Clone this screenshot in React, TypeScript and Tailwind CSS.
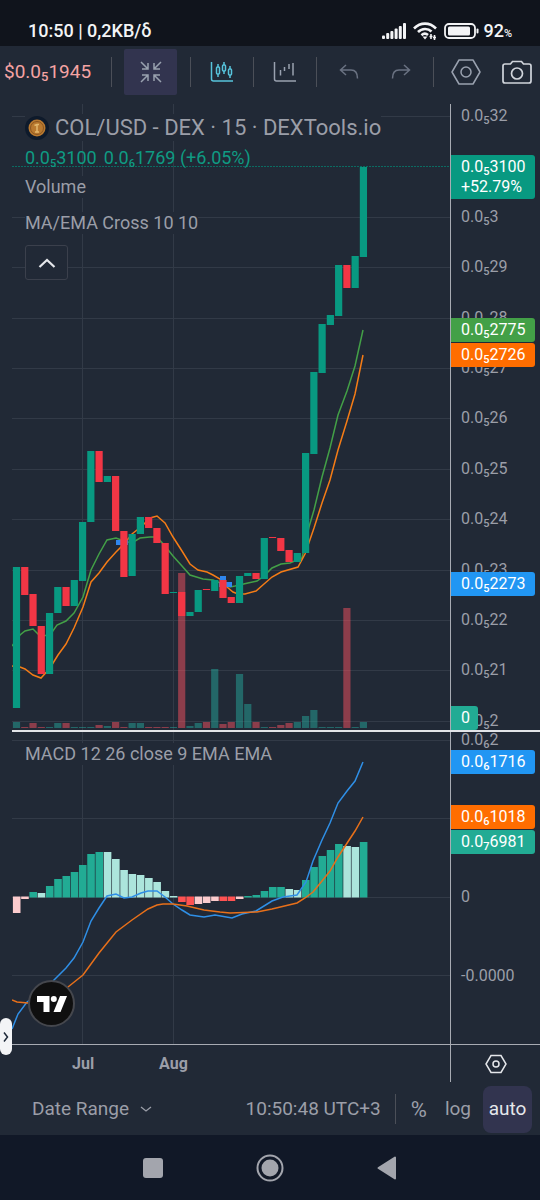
import type { ReactNode } from "react";

const STEP = 8.26;
const FIRST = 16.5;
const BAR = 7.2;

const UP = "#089981";
const DOWN = "#f23645";

// [top, bottom, rising, volume height]
const candles: [number, number, number, number][] = [
  [567, 708, 1, 6], [567, 595, 0, 1], [594, 626, 0, 5], [626, 674, 0, 1],
  [613, 674, 1, 1], [587, 613, 1, 5], [587, 606, 0, 5], [580, 606, 1, 1],
  [522, 581, 1, 1], [451, 522, 1, 1], [451, 482, 0, 3], [476, 482, 1, 2],
  [476, 531, 0, 6], [531, 577, 0, 1], [534, 576, 1, 5], [517, 534, 1, 5],
  [517, 528, 0, 1], [528, 543, 0, 1], [543, 594, 0, 1], [592, 593, 1, 1],
  [592, 616, 0, 155], [612, 616, 1, 2], [590, 612, 1, 5], [589, 590, 0, 6],
  [580, 591, 1, 59], [580, 598, 0, 4], [597, 603, 0, 6], [576, 603, 1, 54],
  [573, 576, 1, 24], [573, 579, 0, 6], [538, 579, 1, 1], [537, 538, 0, 1],
  [538, 551, 0, 3], [550, 562, 0, 5], [553, 562, 1, 6], [453, 553, 1, 12],
  [372, 454, 1, 18], [324, 373, 1, 1], [315, 325, 1, 1], [265, 316, 1, 1],
  [265, 288, 0, 120], [256, 288, 1, 1], [167, 257, 1, 6],
];

const HIST = { g: "#22ab94", l: "#ace5dc", r: "#ff5252", p: "#fccbcd" };

// [end of bar, shade], all bars grow from the zero line
const histogram: [number, keyof typeof HIST][] = [
  [913, "p"], [899, "p"], [892, "g"], [893, "l"], [886, "g"], [879, "g"],
  [876, "g"], [872, "g"], [865, "g"], [854, "g"], [852, "g"], [852, "l"],
  [859, "l"], [870, "l"], [874, "l"], [875, "l"], [878, "l"], [882, "l"],
  [891, "l"], [896, "l"], [902, "r"], [905, "r"], [904, "p"], [903, "p"],
  [901, "p"], [901, "r"], [901, "r"], [899, "p"], [896, "g"], [895, "g"],
  [891, "g"], [887, "g"], [887, "g"], [889, "l"], [890, "l"], [880, "g"],
  [867, "g"], [856, "g"], [850, "g"], [844, "g"], [846, "l"], [847, "l"],
  [842, "g"],
];

const emaLine =
  "12,646 20,635 25,631 33,629 40,636 50,635 57,625 66,621 74,613 83,597 91,570 99,554 107,540 116,538 124,541 132,543 140,538 150,537 157,537 165,546 173,556 182,566 190,575 203,579 213,580 223,584 230,587 235,586 248,583 257,581 264,576 272,568 281,564 290,563 302,558 309,527 314,510 322,477 330,448 338,415 347,391 355,366 363,330";
const maLine =
  "12,666 20,667 25,669 33,675 41,678 50,668 58,655 66,644 74,628 83,607 91,582 99,573 107,562 116,552 124,544 132,534 142,526 150,518 157,516 165,523 173,537 182,551 190,564 198,570 207,572 213,575 220,579 227,587 233,592 238,594 245,594 256,591 264,584 272,577 281,572 298,567 305,554 314,528 322,503 330,480 338,450 347,421 355,394 363,355";
const macdLine =
  "12,1029 18,1014 27,1002 41,992 50,984 57,977 66,968 74,958 83,942 91,921 99,908 107,896 116,894 124,898 132,897 141,893 148,891 157,891 165,897 173,904 182,910 190,915 204,917 215,915 232,918 242,914 256,911 272,901 283,897 297,895 306,882 313,861 322,840 330,823 338,803 347,791 355,781 363,762";
const signalLine =
  "12,1000 17,1002 28,1003 45,1001 58,994 68,987 78,979 83,975 99,953 116,932 132,920 148,909 157,905 163,904 173,904 187,906 204,910 220,912 230,913 257,912 272,909 297,903 305,898 313,892 322,881 330,871 338,857 355,831 363,817";

const barX = (i: number) => FIRST + i * STEP - BAR / 2;

type TinyProps = { lead?: string; sub: string; rest: string; size?: string };

function Tiny({ lead = "0.0", sub, rest, size = "text-[11px]" }: TinyProps) {
  return (
    <>
      {lead}
      <span className={`relative top-[3px] leading-none font-medium ${size}`}>{sub}</span>
      {rest}
    </>
  );
}

function Tick({ y, children }: { y: number; children: ReactNode }) {
  return (
    <span
      className="absolute left-2.5 -translate-y-1/2 whitespace-nowrap text-base leading-5 text-[#9b9ea8]"
      style={{ top: y }}
    >
      {children}
    </span>
  );
}

function Tag({ y, className, children }: { y: number; className: string; children: ReactNode }) {
  return (
    <span
      className={`absolute left-0 -translate-y-1/2 whitespace-nowrap rounded-r-[3px] py-0.5 pl-2.5 text-base leading-5 text-white ${className}`}
      style={{ top: y }}
    >
      {children}
    </span>
  );
}

function Divider() {
  return <span className="h-[30px] w-px shrink-0 bg-[#4b4f58]" />;
}

function StatusBar() {
  return (
    <header className="flex h-[46px] items-end justify-between bg-[#10141c] pr-7 pl-7 pb-1 text-gray-100">
      <span className="text-lg leading-[22px] font-medium">10:50 | 0,2KB/δ</span>
      <div className="flex items-center gap-[7px]">
        <svg className="h-4 w-6" viewBox="0 0 24 16" fill="currentColor" aria-hidden="true">
          <rect x="0" y="12.500" width="3" height="3.500" rx="1" />
          <rect x="4.200" y="10" width="3" height="6" rx="1" />
          <rect x="8.400" y="8" width="3" height="8" rx="1" />
          <rect x="12.600" y="5.500" width="3" height="10.500" rx="1" />
          <rect x="16.800" y="3" width="3" height="13" rx="1" />
          <rect x="21" y="0" width="3" height="16" rx="1" />
        </svg>
        <svg className="h-[18px] w-6" viewBox="0 0 24 18" fill="none" stroke="currentColor" strokeWidth="2.6" aria-hidden="true">
          <path d="M1 6.500C7.500 0 16.500 0 23 6.500" />
          <path d="M5 10C9 6 15 6 18.500 9.500" />
          <path d="M8.500 13.200C10.500 11.300 13 11.300 15 13" />
          <path d="M9.500 14.500h5L12 17.500z" fill="currentColor" stroke="none" />
          <path d="M18 12v5M21.500 13v5" strokeWidth="1.600" />
          <path d="M16.500 14.500h3M20 15.500h3" strokeWidth="1.400" />
        </svg>
        <div className="flex items-center gap-1">
          <svg className="h-4 w-[35px]" viewBox="0 0 35 16" aria-hidden="true">
            <rect x="1" y="1" width="30" height="14" rx="4" fill="none" stroke="currentColor" strokeWidth="1.800" />
            <rect x="4" y="3.500" width="22" height="9" rx="1.500" fill="currentColor" />
            <rect x="32.500" y="5.500" width="2" height="5" rx="1" fill="currentColor" />
          </svg>
          <span className="text-lg leading-[22px] font-medium">
            92<span className="text-[11px] leading-none">%</span>
          </span>
        </div>
      </div>
    </header>
  );
}

function Toolbar() {
  return (
    <div className="flex h-[58px] items-center overflow-hidden pb-1.5 pl-1 text-gray-400">
      <span className="w-[107px] shrink-0 text-[19px] text-[#f5a3a3]">
        <Tiny lead="$0.0" sub="5" rest="1945" size="text-[13px]" />
      </span>
      <Divider />
      <button type="button" aria-label="Exit full screen" className="mr-[13px] ml-3 flex h-[46px] w-[53px] shrink-0 items-center justify-center rounded-xs bg-[#32344f]">
        <svg className="h-[22px] w-[22px]" viewBox="0 0 22 22" fill="none" stroke="currentColor" strokeWidth="1.500">
          <path d="M1 1l7 7M8 2v6H2M21 1l-7 7M14 2v6h6M1 21l7-7M2 14h6v6M21 21l-7-7M20 14h-6v6" />
        </svg>
      </button>
      <Divider />
      <button type="button" aria-label="Candles" className="flex h-[46px] w-[62px] shrink-0 items-center justify-center text-[#57c4dc]">
        <svg className="h-[22px] w-6" viewBox="0 0 24 22" fill="none" stroke="currentColor" strokeWidth="1.500">
          <path d="M1.500 1v17a2 2 0 0 0 2 2H23" />
          <path d="M8 3v3M8 13v3M14 1v3M14 10v3M20 5v3M20 14v3" />
          <rect x="6.500" y="6" width="3" height="7" rx="1" />
          <rect x="12.500" y="4" width="3" height="6" rx="1" />
          <rect x="18.500" y="8" width="3" height="6" rx="1" />
        </svg>
      </button>
      <Divider />
      <button type="button" aria-label="Indicators" className="flex h-[46px] w-[62px] shrink-0 items-center justify-center">
        <svg className="h-[22px] w-6" viewBox="0 0 24 22" fill="none" stroke="currentColor" strokeWidth="1.500">
          <path d="M1.500 1v17a2 2 0 0 0 2 2H23" />
          <path d="M7.500 9v5.500M11.500 6v4M16 3v5M20 2v12.500" />
        </svg>
      </button>
      <Divider />
      <button type="button" aria-label="Undo" className="ml-5 flex h-[46px] w-6 shrink-0 items-center justify-center text-gray-500">
        <svg className="h-4 w-5" viewBox="0 0 20 16" fill="none" stroke="currentColor" strokeWidth="1.500">
          <path d="M7 1L1.500 6L7 11M1.500 6H12c4 0 6.500 3 6.500 8.500" />
        </svg>
      </button>
      <button type="button" aria-label="Redo" className="mr-5 ml-7 flex h-[46px] w-6 shrink-0 items-center justify-center text-gray-500">
        <svg className="h-4 w-5" viewBox="0 0 20 16" fill="none" stroke="currentColor" strokeWidth="1.500">
          <path d="M13 1l5.500 5L13 11M18.500 6H8c-4 0-6.500 3-6.500 8.500" />
        </svg>
      </button>
      <Divider />
      <button type="button" aria-label="Settings" className="ml-[17px] shrink-0">
        <svg className="h-[30px] w-[30px]" viewBox="0 0 30 30" fill="none" stroke="currentColor" strokeWidth="1.500">
          <path d="M8 3h14l7 12l-7 12H8L1 15z" strokeLinejoin="round" />
          <circle cx="15" cy="15" r="5" />
        </svg>
      </button>
      <button type="button" aria-label="Take a snapshot" className="ml-[21px] shrink-0 text-gray-300">
        <svg className="h-[26px] w-[30px]" viewBox="0 0 30 26" fill="none" stroke="currentColor" strokeWidth="1.700">
          <path d="M3 5h5.500l2-2.500h9l2 2.500H27a2 2 0 0 1 2 2v15a2 2 0 0 1-2 2H3a2 2 0 0 1-2-2V7a2 2 0 0 1 2-2z" />
          <circle cx="15" cy="14.500" r="5.500" />
        </svg>
      </button>
    </div>
  );
}

function PriceChart() {
  return (
    <svg className="block h-full w-full" viewBox="12 104 438 626" preserveAspectRatio="none" role="img" aria-label="COL/USD candles">
      <g stroke="#323a47">
        {[0, 2, 3, 4, 5, 6, 7, 8, 9, 10, 11, 12].map((n) => {
          const y = Math.round(116 + n * 50.4) + 0.5;
          return <line key={n} x1="12" x2="450" y1={y} y2={y} />;
        })}
        <line x1="82.500" x2="82.500" y1="104" y2="730" />
        <line x1="173.500" x2="173.500" y1="104" y2="730" />
      </g>
      <line x1="12" x2="450" y1="166.500" y2="166.500" stroke="#0b6b62" strokeDasharray="2 1" />
      {candles.map(([, , up, volume], i) => (
        <rect key={i} x={barX(i)} y={728 - volume} width={BAR} height={volume} fill={up ? "#26a69a" : "#f7525f"} opacity="0.5" />
      ))}
      <polyline points={emaLine} fill="none" stroke="#43a047" strokeWidth="1.500" />
      <polyline points={maLine} fill="none" stroke="#f57c16" strokeWidth="1.500" />
      <g fill="#2f86ef">
        <rect x="116" y="540" width="12" height="5" />
        <rect x="220" y="576" width="6" height="11" />
        <rect x="219" y="582" width="13" height="5" />
      </g>
      {candles.map(([top, bottom, up], i) => (
        <rect key={i} x={barX(i)} y={top} width={BAR} height={bottom - top} fill={up ? UP : DOWN} />
      ))}
    </svg>
  );
}

function MacdChart() {
  return (
    <svg className="block h-full w-full" viewBox="12 732 438 312" preserveAspectRatio="none" role="img" aria-label="MACD">
      <g stroke="#323a47">
        <path d="M12 740.500H450M12 818.500H450M12 897.500H450M12 975.500H450M82.500 732V1044M173.500 732V1044" />
      </g>
      {histogram.map(([end, shade], i) => (
        <rect
          key={i}
          x={barX(i)}
          y={end > 897 ? 896.5 : end}
          width={BAR + 0.4}
          height={end > 897 ? end - 896.5 : 897.5 - end}
          fill={HIST[shade]}
        />
      ))}
      <polyline points={macdLine} fill="none" stroke="#2f8fe6" strokeWidth="1.500" />
      <polyline points={signalLine} fill="none" stroke="#e8701a" strokeWidth="1.500" />
    </svg>
  );
}

function CoinIcon() {
  return (
    <svg className="h-6 w-6 shrink-0" viewBox="0 0 24 24" aria-hidden="true">
      <circle cx="12" cy="12" r="12" fill="#0e1a2b" />
      <circle cx="12" cy="12" r="8.500" fill="#b9792f" />
      <circle cx="12" cy="12" r="6.500" fill="none" stroke="#8a5520" />
      <path d="M9.500 9.500L12 8.500h2M12 8v7.500M10 16h4" fill="none" stroke="#e3b76c" strokeWidth="1.500" />
    </svg>
  );
}

function Legend() {
  return (
    <div className="absolute top-2.5 left-[13px] flex flex-col items-start text-lg text-[#9b9ea8]">
      <h1 className="flex h-[27px] items-center gap-1.5 bg-[#212936] text-[22px] leading-[27px]">
        <CoinIcon />
        COL/USD - DEX · 15 · DEXTools.io
      </h1>
      <p className="mt-[7px] flex h-5 items-center gap-[7px] whitespace-nowrap leading-5 text-[#0f9b83]">
        <span><Tiny sub="5" rest="3100" /></span>
        <span><Tiny sub="6" rest="1769 (+6.05%)" /></span>
      </p>
      <p className="mt-2 h-[22px] bg-[#212936] leading-[22px]">Volume</p>
      <p className="mt-3.5 h-[22px] bg-[#212936] leading-[22px]">MA/EMA Cross 10 10</p>
      <button type="button" aria-label="Collapse legend" className="mt-[11px] flex h-[35px] w-[43px] items-center justify-center rounded-[3px] border border-[#3b404c] bg-[#212936] text-gray-200">
        <svg className="h-2.5 w-[18px]" viewBox="0 0 18 10" fill="none" stroke="currentColor" strokeWidth="2.200">
          <path d="M1.500 9L9 2l7.500 7" />
        </svg>
      </button>
    </div>
  );
}

function TimeAxis() {
  return (
    <div className="flex h-[37px] text-base font-bold text-[#9b9ea8]">
      <div className="flex flex-1 items-center pl-[60px]">
        <span className="w-[87px]">Jul</span>
        <span>Aug</span>
      </div>
      <div className="flex w-[90px] items-center justify-center border-l border-[#a8abb3] text-gray-200">
        <button type="button" aria-label="Axis settings">
          <svg className="h-5 w-[22px]" viewBox="0 0 22 20" fill="none" stroke="currentColor" strokeWidth="1.500">
            <path d="M6 1.500h10l5 8.500l-5 8.500H6L1 10z" />
            <circle cx="11" cy="10" r="3" />
          </svg>
        </button>
      </div>
    </div>
  );
}

function BottomBar() {
  return (
    <div className="flex h-[53px] items-center pt-px pr-2 pl-8 text-[19px] text-[#9b9ea8]">
      <button type="button" className="flex items-center gap-[11px]">
        Date Range
        <svg className="h-1.5 w-3" viewBox="0 0 12 6" fill="none" stroke="currentColor" strokeWidth="1.300">
          <path d="M1 1l5 4l5-4" />
        </svg>
      </button>
      <button type="button" className="mr-3.5 ml-auto">10:50:48 UTC+3</button>
      <Divider />
      <button type="button" className="ml-[15px] text-[22px]">%</button>
      <button type="button" className="mr-3 ml-[18px]">log</button>
      <button type="button" className="h-[47px] w-[49px] rounded-lg bg-[#32344f] text-gray-200">auto</button>
    </div>
  );
}

function NavBar() {
  return (
    <nav className="flex h-[65px] items-center justify-center gap-[93px] bg-[#111827] text-[#a3a5ad]">
      <button type="button" aria-label="Recent apps" className="h-5 w-5 rounded-[3px] bg-[#a3a5ad]" />
      <button type="button" aria-label="Home">
        <svg className="h-7 w-7" viewBox="0 0 28 28">
          <circle cx="14" cy="14" r="12.500" fill="none" stroke="currentColor" strokeWidth="2" />
          <circle cx="14" cy="14" r="8.500" fill="currentColor" />
        </svg>
      </button>
      <button type="button" aria-label="Back">
        <svg className="h-6 w-5" viewBox="0 0 20 24" fill="currentColor">
          <path d="M18 1.500v21L1.500 12z" stroke="currentColor" strokeWidth="2" strokeLinejoin="round" />
        </svg>
      </button>
    </nav>
  );
}

export default function App() {
  return (
    <div className="relative min-h-screen overflow-hidden bg-[#212936] font-['Roboto',sans-serif]">
      <StatusBar />
      <Toolbar />

      <main className="relative pl-3">
        {/* Price pane */}
        <section className="flex h-[626px]">
          <div className="relative min-w-0 flex-1">
            <PriceChart />
            <Legend />
          </div>
          <div className="relative w-[90px] shrink-0 overflow-hidden border-l border-[#a8abb3]">
            {["32", "", "3", "29", "28", "27", "26", "25", "24", "23", "22", "21", "2"].map(
              (rest, i) =>
                rest && (
                  <Tick key={rest} y={12 + i * 50.4}>
                    <Tiny sub="5" rest={rest} />
                  </Tick>
                ),
            )}
            <Tag y={73} className="w-[84px] bg-[#089981]">
              <Tiny sub="5" rest="3100" />
              <br />
              +52.79%
            </Tag>
            <Tag y={226} className="w-[84px] bg-[#43a047]"><Tiny sub="5" rest="2775" /></Tag>
            <Tag y={251} className="w-[84px] bg-[#ff6d00]"><Tiny sub="5" rest="2726" /></Tag>
            <Tag y={480} className="w-[84px] bg-[#2196f3]"><Tiny sub="5" rest="2273" /></Tag>
            <Tag y={614} className="w-[27px] bg-[#22ab94]">0</Tag>
          </div>
        </section>
        <div className="h-0.5 bg-[#e2e4e8]" />

        {/* MACD pane */}
        <section className="flex h-[312px]">
          <div className="relative min-w-0 flex-1">
            <MacdChart />
            <p className="absolute top-[11px] left-[13px] h-[22px] bg-[#212936] text-lg leading-[22px] text-[#9b9ea8]">
              MACD 12 26 close 9 EMA EMA
            </p>
            <a href="#tradingview" aria-label="TradingView" className="absolute bottom-[17px] left-4 flex h-[47px] w-[47px] items-center justify-center rounded-full border-2 border-[#45474d] bg-[#0f0f0f] text-white">
              <svg className="h-4 w-[30px]" viewBox="0 0 30 16" fill="currentColor">
                <path d="M0 0h12.500v16H6.500V6H0z" />
                <circle cx="16.800" cy="3" r="3" />
                <path d="M23 0h7l-6.500 16h-7z" />
              </svg>
            </a>
          </div>
          <div className="relative w-[90px] shrink-0 border-l border-[#a8abb3]">
            <Tick y={8}><Tiny sub="6" rest="2" /></Tick>
            <Tick y={165}>0</Tick>
            <Tick y={244}>-0.0000</Tick>
            <Tag y={30} className="w-[84px] bg-[#2196f3]"><Tiny sub="6" rest="1716" /></Tag>
            <Tag y={85} className="w-[84px] bg-[#ff6d00]"><Tiny sub="6" rest="1018" /></Tag>
            <Tag y={110} className="w-[84px] bg-[#22ab94]"><Tiny sub="7" rest="6981" /></Tag>
          </div>
        </section>
        <div className="h-px bg-[#a8abb3]" />
        <TimeAxis />

        <button type="button" aria-label="Show drawing tools" className="absolute bottom-[27px] left-0 flex h-[37px] w-3 items-center justify-center rounded-md bg-gray-100 text-gray-800">
          <svg className="h-2.5 w-1.5" viewBox="0 0 6 10" fill="none" stroke="currentColor" strokeWidth="1.500">
            <path d="M1 0.500L4.500 5L1 9.500" />
          </svg>
        </button>
      </main>

      <BottomBar />
      <NavBar />
    </div>
  );
}
